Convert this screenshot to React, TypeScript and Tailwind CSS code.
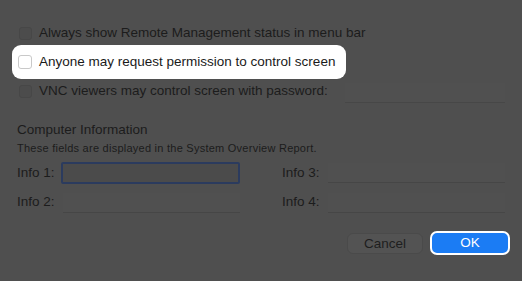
export default function App() {
  return (
    <div
      className="w-[522px] h-[281px] bg-[#4f4f4f] text-[#1c1c1c] pl-[12px] pr-[12px] pt-[25px] overflow-hidden"
      style={{ fontFamily: '"Liberation Sans", Arial, sans-serif' }}
    >
      {/* Checkbox rows */}
      <div className="flex items-center h-[16px] pl-[7px] gap-[7px] text-[13.5px]">
        <span className="w-[13px] h-[13px] rounded-[3px] border border-[#474747] bg-[#4c4c4c]" />
        <span>Always show Remote Management status in menu bar</span>
      </div>

      <div className="mt-[4px] flex items-center h-[34px] w-[334px] pl-[6px] gap-[7px] rounded-[9px] bg-white text-[13.5px] text-[#1a1a1a]">
        <span className="w-[14px] h-[14px] rounded-[3px] border border-[#c9c9c9] bg-white" />
        <span>Anyone may request permission to control screen</span>
      </div>

      <div className="mt-[4px] flex items-center h-[16px] pl-[7px] pr-[5px] gap-[7px] text-[13.5px]">
        <span className="w-[13px] h-[13px] rounded-[3px] border border-[#474747] bg-[#4c4c4c]" />
        <span>VNC viewers may control screen with password:</span>
        <span className="ml-auto w-[160px] h-[20px] mt-[3px] border-b border-[#474747] bg-[#505050]" />
      </div>

      {/* Computer information */}
      <div className="pl-[5px] pr-[5px]">
        <div className="mt-[23px] text-[13.5px] leading-[16px]">Computer Information</div>
        <div className="mt-[4px] text-[11px] leading-[12px] tracking-[0.25px]">
          These fields are displayed in the System Overview Report.
        </div>

        <div className="mt-[8px] grid grid-cols-2 gap-x-[42px] gap-y-[8px] text-[13.5px]">
          <div className="flex items-center h-[22px]">
            <span className="w-[44px]">Info 1:</span>
            <span className="flex-1 h-[22px] border-2 border-[#2b3b5e] rounded-[2px] bg-[#4b4b4b]" />
          </div>
          <div className="flex items-center h-[22px]">
            <span className="w-[46px]">Info 3:</span>
            <span className="flex-1 h-[20px] border-b border-[#464646] bg-[#505050]" />
          </div>
          <div className="flex items-center h-[21px]">
            <span className="w-[46px]">Info 2:</span>
            <span className="flex-1 h-[20px] border-b border-[#464646] bg-[#505050]" />
          </div>
          <div className="flex items-center h-[21px]">
            <span className="w-[46px]">Info 4:</span>
            <span className="flex-1 h-[20px] border-b border-[#464646] bg-[#505050]" />
          </div>
        </div>
      </div>

      {/* Buttons */}
      <div className="mt-[18px] flex justify-end items-center gap-[7px] text-[13.5px]">
        <button className="w-[76px] h-[21px] rounded-[6px] bg-[#535353] border border-[#4a4a4a] text-[#1e1e1e]">
          Cancel
        </button>
        <button className="w-[80px] h-[24px] rounded-[7px] bg-[#1b7cf4] border-2 border-white text-white">
          OK
        </button>
      </div>
    </div>
  )
}
